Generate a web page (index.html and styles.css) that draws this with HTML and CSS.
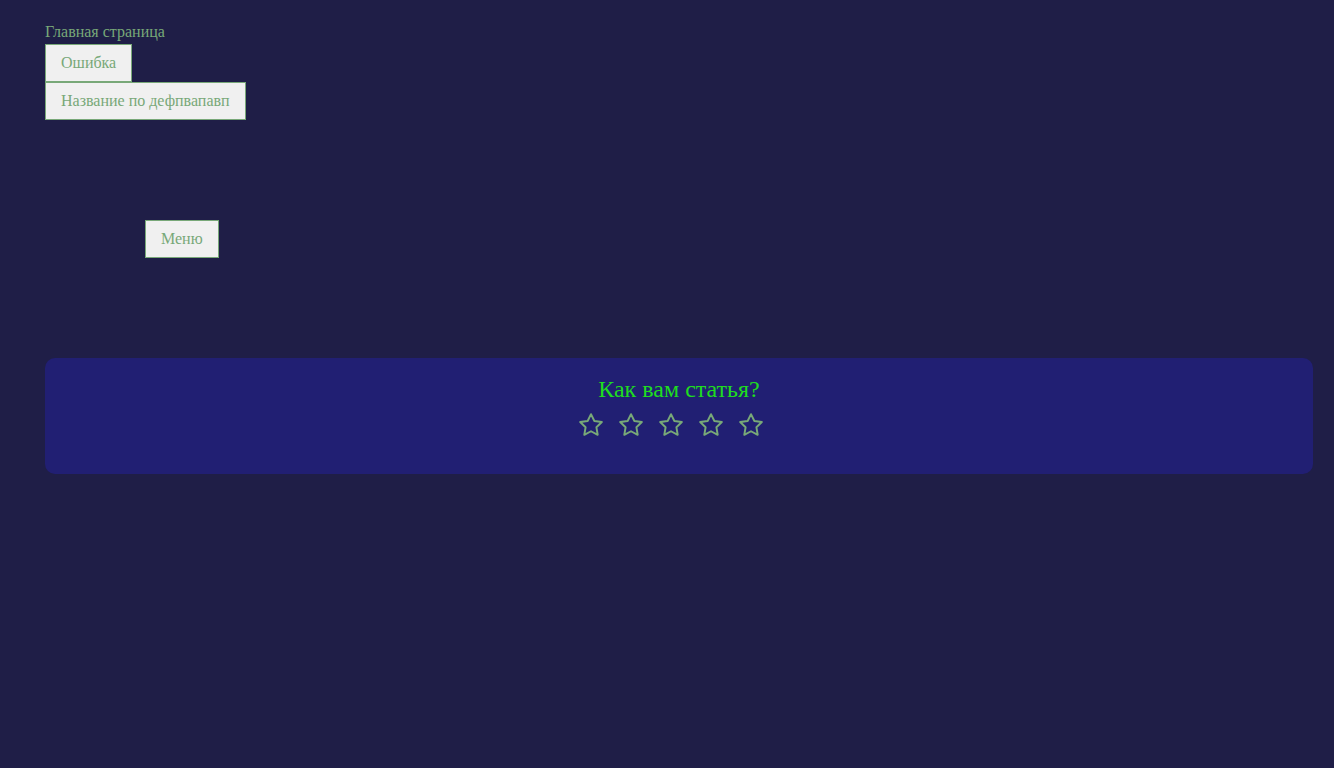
FILE: index.html
```html
<!DOCTYPE html>
<html lang="ru">
<head>
<meta charset="utf-8">
<title>Статья</title>
<link rel="stylesheet" href="styles.css">
</head>
<body>
<div class="page">
  <a class="home" href="#">Главная страница</a>
  <button class="btn">Ошибка</button>
  <button class="btn">Название по дефпвапавп</button>
  <button class="btn menu">Меню</button>
  <section class="rating">
    <h2 class="rating-title">Как вам статья?</h2>
    <div class="stars">
      <svg class="star" viewBox="0 0 24 24"><polygon points="12 2 15.09 8.26 22 9.27 17 14.14 18.18 21.02 12 17.77 5.82 21.02 7 14.14 2 9.27 8.91 8.26 12 2"/></svg>
      <svg class="star" viewBox="0 0 24 24"><polygon points="12 2 15.09 8.26 22 9.27 17 14.14 18.18 21.02 12 17.77 5.82 21.02 7 14.14 2 9.27 8.91 8.26 12 2"/></svg>
      <svg class="star" viewBox="0 0 24 24"><polygon points="12 2 15.09 8.26 22 9.27 17 14.14 18.18 21.02 12 17.77 5.82 21.02 7 14.14 2 9.27 8.91 8.26 12 2"/></svg>
      <svg class="star" viewBox="0 0 24 24"><polygon points="12 2 15.09 8.26 22 9.27 17 14.14 18.18 21.02 12 17.77 5.82 21.02 7 14.14 2 9.27 8.91 8.26 12 2"/></svg>
      <svg class="star" viewBox="0 0 24 24"><polygon points="12 2 15.09 8.26 22 9.27 17 14.14 18.18 21.02 12 17.77 5.82 21.02 7 14.14 2 9.27 8.91 8.26 12 2"/></svg>
    </div>
  </section>
</div>
</body>
</html>
```

FILE: styles.css
```css
html, body {
  margin: 0;
  padding: 0;
  background: #1f1e47;
  min-height: 100%;
}
body {
  font-family: "Liberation Serif", "Times New Roman", serif;
  font-size: 16px;
  color: #78a878;
}
.page {
  padding: 23px 21px 0 45px;
  display: flex;
  flex-direction: column;
  align-items: flex-start;
}
.home {
  display: block;
  color: #78a878;
  text-decoration: none;
  line-height: 18px;
  margin-bottom: 3px;
}
.btn {
  display: block;
  font-family: "Liberation Serif", "Times New Roman", serif;
  font-size: 16px;
  line-height: 18px;
  color: #78a878;
  background: #f0f0f0;
  border: 1px solid #78a878;
  padding: 9px 15px;
  margin: 0;
  border-radius: 0;
}
.menu {
  margin: 100px 0 0 100px;
}
.rating {
  align-self: stretch;
  margin-top: 100px;
  background: #211f73;
  border-radius: 10px;
  height: 116px;
  box-sizing: border-box;
  padding-top: 17px;
  display: flex;
  flex-direction: column;
  align-items: center;
}
.rating-title {
  margin: 0;
  font-weight: normal;
  font-size: 24px;
  line-height: 28px;
  color: #1fdc1f;
}
.stars {
  display: flex;
  gap: 14px;
  margin-top: 9px;
  padding-right: 16px;
}
.star {
  width: 26px;
  height: 26px;
  fill: none;
  stroke: #78a878;
  stroke-width: 1.8;
  stroke-linejoin: round;
  stroke-linecap: round;
}
```
